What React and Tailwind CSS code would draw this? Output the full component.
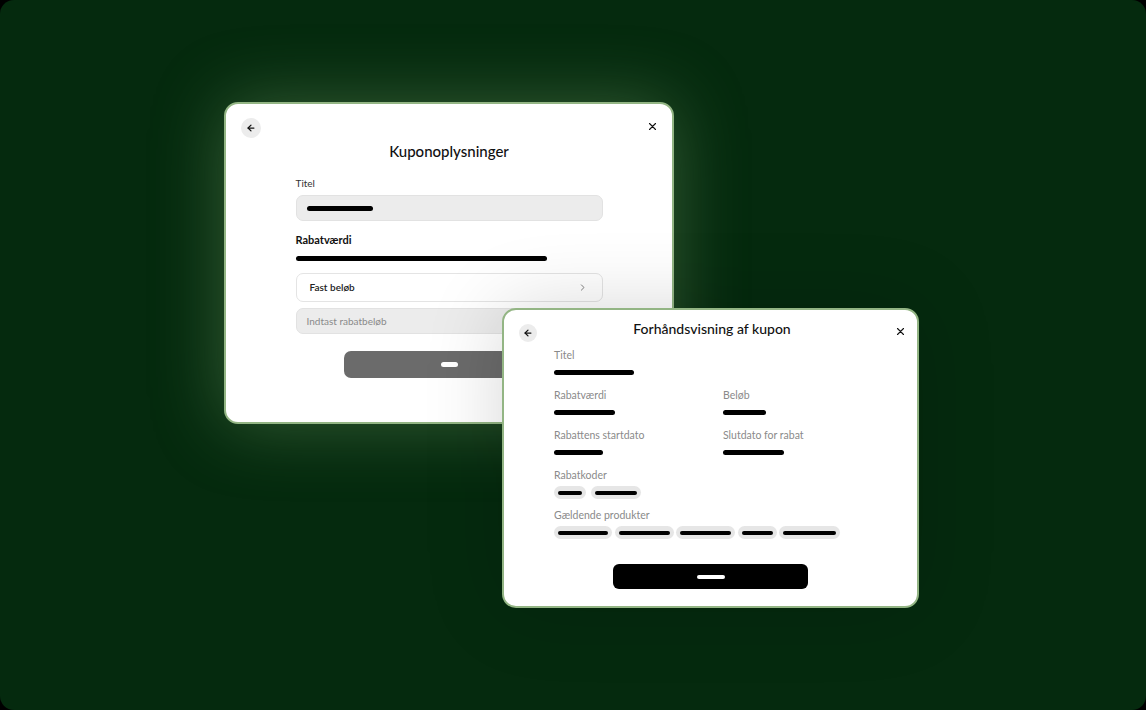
import React from "react";

const Bar = ({ w, h = "h-[5px]" }) => (
  <div className={`${h} rounded-full bg-black`} style={{ width: w }} />
);

const BackBtn = ({ size }) => (
  <div className={`${size} flex items-center justify-center rounded-full bg-[#ececec]`}>
    <svg width="10" height="10" viewBox="0 0 24 24" fill="none" stroke="#111" strokeWidth="3" strokeLinecap="round" strokeLinejoin="round">
      <path d="M19 12H5" />
      <path d="M12 19l-7-7 7-7" />
    </svg>
  </div>
);

const CloseX = () => (
  <svg width="9" height="9" viewBox="0 0 24 24" fill="none" stroke="#111" strokeWidth="3" strokeLinecap="round">
    <path d="M4 4l16 16M20 4L4 20" />
  </svg>
);

const Chip = ({ w }) => (
  <div className="flex h-[13px] items-center rounded-full bg-[#e6e6e6] px-[4px]">
    <Bar w={w} h="h-[4px]" />
  </div>
);

const Label = ({ children }) => (
  <div className="text-[10.5px] leading-[12px] text-[#8a8a8a]">{children}</div>
);

export default function App() {
  return (
    <div
      className="h-[710px] w-[1146px] overflow-hidden bg-black"
      style={{ fontFamily: "Lato, 'Noto Sans', sans-serif" }}
    >
      <div className="relative h-full w-full rounded-[14px] bg-[#052a0e]">
        {/* Card 1 */}
        <div className="absolute left-[224px] top-[102px] flex h-[322px] w-[450px] flex-col rounded-[14px] border-2 border-[#93b584] bg-white shadow-[0_0_70px_rgba(140,190,125,0.35)]">
          <div className="flex items-start justify-between pl-[15px] pr-[15px] pt-[14px]">
            <BackBtn size="h-[20px] w-[20px]" />
            <div className="pt-[4px]">
              <CloseX />
            </div>
          </div>
          <div className="mt-[4px] text-center text-[15px] font-medium leading-[18px] text-[#111]">Kuponoplysninger</div>
          <div className="mx-auto mt-[17px] flex w-[307px] flex-col">
            <div className="text-[10px] leading-[12px] text-[#333]">Titel</div>
            <div className="mt-[6px] flex h-[26px] items-center rounded-[7px] border border-[#e2e2e2] bg-[#ececec] px-[10px]">
              <Bar w="66px" />
            </div>
            <div className="mt-[12px] text-[11px] font-bold leading-[14px] text-[#111]">Rabatværdi</div>
            <div className="mt-[9px]">
              <Bar w="251px" />
            </div>
            <div className="mt-[12px] flex h-[29px] items-center justify-between rounded-[7px] border border-[#e4e4e4] bg-white pl-[13px] pr-[15px]">
              <span className="text-[10px] font-semibold text-[#222]">Fast beløb</span>
              <svg width="9" height="9" viewBox="0 0 24 24" fill="none" stroke="#777" strokeWidth="2.5" strokeLinecap="round" strokeLinejoin="round">
                <path d="M9 5l7 7-7 7" />
              </svg>
            </div>
            <div className="mt-[6px] flex h-[26px] items-center rounded-[7px] border border-[#e2e2e2] bg-[#ececec] px-[10px]">
              <span className="text-[10px] text-[#8a8a8a]">Indtast rabatbeløb</span>
            </div>
            <div className="mx-auto mt-[17px] flex h-[27px] w-[210px] items-center justify-center rounded-[7px] bg-[#6b6b6b]">
              <div className="h-[5px] w-[17px] rounded-full bg-white" />
            </div>
          </div>
        </div>

        {/* Card 2 */}
        <div className="absolute left-[502px] top-[308px] flex h-[300px] w-[417px] flex-col rounded-[14px] border-2 border-[#93b584] bg-white shadow-[0_0_80px_rgba(0,0,0,0.16)]">
          <div className="grid grid-cols-[1fr_auto_1fr] items-start pl-[15px] pr-[12px] pt-[9px]">
            <div className="mt-[5px]">
              <BackBtn size="h-[18px] w-[18px]" />
            </div>
            <div className="text-[14px] font-medium leading-[20px] text-[#111]">Forhåndsvisning af kupon</div>
            <div className="mt-[8px] justify-self-end">
              <CloseX />
            </div>
          </div>
          <div className="flex flex-col pl-[50px]">
            <div className="mt-[7px]"><Label>Titel</Label></div>
            <div className="mt-[9px]"><Bar w="80px" /></div>
            <div className="mt-[14px] grid grid-cols-[169px_1fr]">
              <div>
                <Label>Rabatværdi</Label>
                <div className="mt-[9px]"><Bar w="61px" /></div>
              </div>
              <div>
                <Label>Beløb</Label>
                <div className="mt-[9px]"><Bar w="43px" /></div>
              </div>
            </div>
            <div className="mt-[14px] grid grid-cols-[169px_1fr]">
              <div>
                <Label>Rabattens startdato</Label>
                <div className="mt-[9px]"><Bar w="49px" /></div>
              </div>
              <div>
                <Label>Slutdato for rabat</Label>
                <div className="mt-[9px]"><Bar w="61px" /></div>
              </div>
            </div>
            <div className="mt-[14px]"><Label>Rabatkoder</Label></div>
            <div className="mt-[5px] flex gap-[5px]">
              <Chip w="24px" />
              <Chip w="42px" />
            </div>
            <div className="mt-[10px]"><Label>Gældende produkter</Label></div>
            <div className="mt-[5px] flex gap-[2.5px]">
              <Chip w="50px" />
              <Chip w="51px" />
              <Chip w="51px" />
              <Chip w="31px" />
              <Chip w="53px" />
            </div>
          </div>
          <div className="mx-auto mt-[25px] flex h-[25px] w-[195px] items-center justify-center rounded-[6px] bg-black">
            <div className="h-[4px] w-[28px] rounded-full bg-white" />
          </div>
        </div>
      </div>
    </div>
  );
}
